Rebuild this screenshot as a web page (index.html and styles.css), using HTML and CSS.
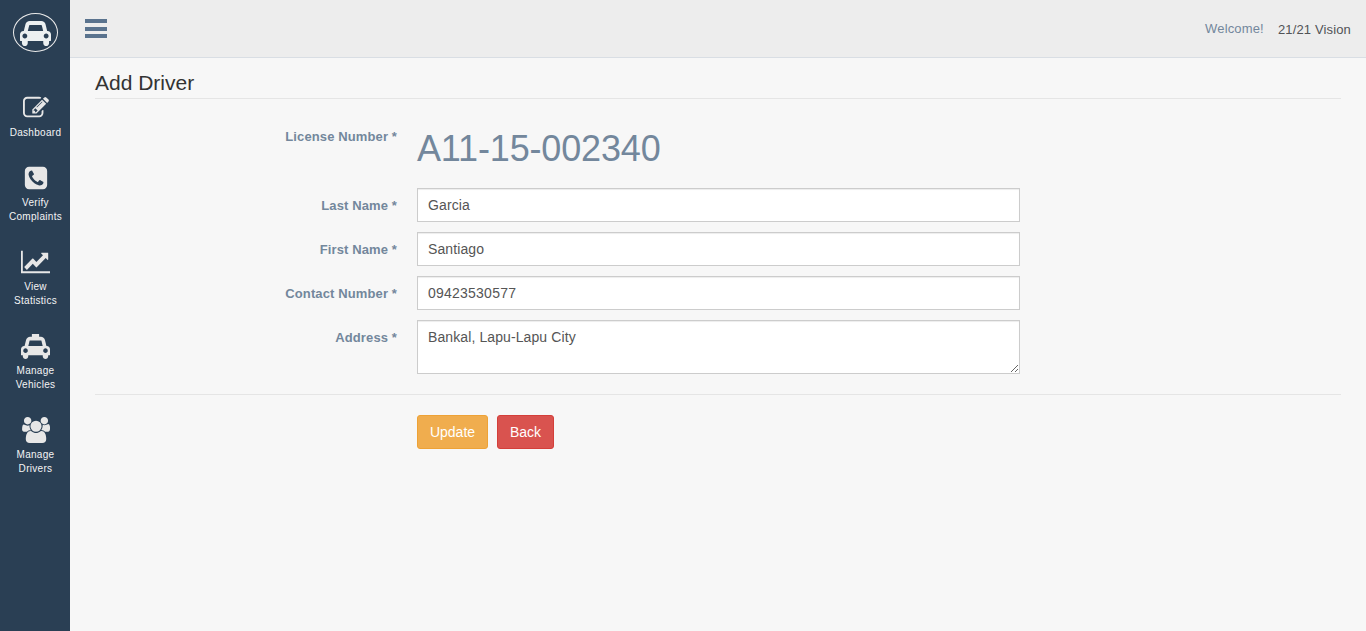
FILE: index.html
```html
<!DOCTYPE html>
<html lang="en">
<head>
<meta charset="utf-8">
<title>Add Driver</title>
<link rel="stylesheet" href="styles.css">
</head>
<body>
<div class="app">
  <aside class="sidebar">
    <a class="logo"><svg width="31" height="28" viewBox="0 0 2048 1792" preserveAspectRatio="none"><path d="M480 1088q0-66-47-113t-113-47-113 47-47 113 47 113 113 47 113-47 47-113zm36-320h1016l-89-357q-2-8-14-17.5t-21-9.5h-768q-9 0-21 9.5t-14 17.5zm1372 320q0-66-47-113t-113-47-113 47-47 113 47 113 113 47 113-47 47-113zm160-96v384q0 14-9 23t-23 9h-96v128q0 80-56 136t-136 56-136-56-56-136v-128h-1024v128q0 80-56 136t-136 56-136-56-56-136v-128h-96q-14 0-23-9t-9-23v-384q0-93 65.5-158.5t158.5-65.5h28l105-419q23-94 104-157.5t179-63.5h768q98 0 179 63.5t104 157.5l105 419h28q93 0 158.5 65.5t65.5 158.5z"/></svg></a>
    <nav class="menu">
      <a class="item"><svg width="26" height="26" viewBox="0 0 1792 1792"><path d="M888 1184l116-116-152-152-116 116v56h96v96h56zm440-720q-16-16-33 1l-350 350q-17 17-1 33t33-1l350-350q17-17 1-33zm80 594v190q0 119-84.5 203.5t-203.5 84.5h-832q-119 0-203.5-84.5t-84.5-203.5v-832q0-119 84.5-203.5t203.5-84.5h832q63 0 117 25 15 7 18 23 3 17-9 29l-49 49q-14 14-32 8-23-6-45-6h-832q-66 0-113 47t-47 113v832q0 66 47 113t113 47h832q66 0 113-47t47-113v-126q0-13 9-22l64-64q15-15 35-7t20 29zm-96-738l288 288-672 672h-288v-288zm444 132l-92 92-288-288 92-92q28-28 68-28t68 28l152 152q28 28 28 68t-28 68z"/></svg><span>Dashboard</span></a>
      <a class="item"><svg width="26" height="26" viewBox="0 0 1792 1792"><path d="M1408 1193q0-11-2-16t-18-16.5-40.5-25-47.5-26.5-45.5-25-28.5-15q-5-3-19-13t-25-15-21-5q-15 0-36.5 20.5t-39.5 45-38.5 45-33.5 20.5q-7 0-16.5-3.5t-15.5-6.5-17-9.5-14-8.5q-99-55-170-126.5t-127-170.5q-2-3-8.5-14t-9.5-17-6.5-15.5-3.5-16.5q0-13 20.5-33.5t45-38.5 45-39.5 20.5-36.5q0-10-5-21t-15-25-13-19q-3-6-15-28.5t-25-45.5-26.5-47.5-25-40.5-16.5-18-16-2q-48 0-101 22-46 21-80 94.5t-34 130.5q0 16 2.5 34t5 30.5 9 33 10 29.5 12.5 33 11 30q60 164 216.5 320.5t320.5 216.5q6 2 30 11t33 12.5 29.5 10 33 9 30.5 5 34 2.5q57 0 130.5-34t94.5-80q22-53 22-101zm256-777v960q0 119-84.5 203.5t-203.5 84.5h-960q-119 0-203.5-84.5t-84.5-203.5v-960q0-119 84.5-203.5t203.5-84.5h960q119 0 203.5 84.5t84.5 203.5z"/></svg><span>Verify Complaints</span></a>
      <a class="item"><svg width="29" height="26" viewBox="0 0 2048 1792" preserveAspectRatio="none"><path d="M2048 1536v128h-2048v-1536h128v1408h1920zm-128-1248v435q0 21-19.5 29.5t-35.5-7.5l-121-121-633 633q-10 10-23 10t-23-10l-233-233-416 416-192-192 585-585q10-10 23-10t23 10l233 233 464-464-121-121q-16-16-7.5-35.5t29.5-19.5h435q14 0 23 9t9 23z"/></svg><span>View Statistics</span></a>
      <a class="item"><svg width="29" height="26" viewBox="0 0 2048 1792" preserveAspectRatio="none"><path d="M480 1216q0-66-47-113t-113-47-113 47-47 113 47 113 113 47 113-47 47-113zm36-320h1016l-89-357q-2-8-14-17.5t-21-9.5h-768q-9 0-21 9.5t-14 17.5zm1372 320q0-66-47-113t-113-47-113 47-47 113 47 113 113 47 113-47 47-113zm160-96v384q0 14-9 23t-23 9h-96v64q0 80-56 136t-136 56-136-56-56-136v-64h-1024v64q0 80-56 136t-136 56-136-56-56-136v-64h-96q-14 0-23-9t-9-23v-384q0-93 65.5-158.5t158.5-65.5h28l105-419q23-94 104-157.5t179-63.5h128v-160q0-14 9-23t23-9h448q14 0 23 9t9 23v160h128q98 0 179 63.5t104 157.5l105 419h28q93 0 158.5 65.5t65.5 158.5z"/></svg><span>Manage Vehicles</span></a>
      <a class="item"><svg width="28" height="26" viewBox="0 0 1920 1792"><path d="M593 896q-162 5-265 128h-134q-82 0-138-40.5t-56-118.5q0-353 124-353 6 0 43.5 21t97.5 42.5 119 21.5q67 0 133-23-5 37-5 66 0 159 93 293zm1071 637q0 120-73 189.5t-194 69.5h-874q-121 0-194-69.5t-73-189.5q0-53 3.5-103.5t14-109 26.5-108.5 43-97.5 62-81 85.5-53.5 111.5-20q10 0 43 21.5t73 48 107 48 135 21.5 135-21.5 107-48 73-48 43-21.5q61 0 111.5 20t85.5 53.5 62 81 43 97.5 26.5 108.5 14 109 3.5 103.5zm-1024-1277q0 106-75 181t-181 75-181-75-75-181 75-181 181-75 181 75 75 181zm704 384q0 159-112.5 271.5t-271.5 112.5-271.5-112.5-112.5-271.5 112.5-271.5 271.5-112.5 271.5 112.5 112.5 271.5zm576 225q0 78-56 118.5t-138 40.5h-134q-103-123-265-128 93-134 93-293 0-29-5-66 66 23 133 23 59 0 119-21.5t97.5-42.5 43.5-21q124 0 124 353zm-128-609q0 106-75 181t-181 75-181-75-75-181 75-181 181-75 181 75 75 181z"/></svg><span>Manage Drivers</span></a>
    </nav>
  </aside>
  <div class="main">
    <header class="topbar">
      <a class="toggle"><svg width="22" height="19" viewBox="0 0 22 19" shape-rendering="crispEdges"><path d="M0 0h22v4H0zM0 8h22v4H0zM0 15h22v4H0z"/></svg></a>
      <div class="user"><span class="welcome">Welcome!</span><span class="name">21/21 Vision</span></div>
    </header>
    <main class="content">
      <h2 class="title">Add Driver</h2>
      <form class="form">
        <div class="row license"><label class="label">License Number *</label><div class="number">A11-15-002340</div></div>
        <div class="row"><label class="label" for="last">Last Name *</label><input class="field" id="last" value="Garcia"></div>
        <div class="row"><label class="label" for="first">First Name *</label><input class="field" id="first" value="Santiago"></div>
        <div class="row"><label class="label" for="contact">Contact Number *</label><input class="field digits" id="contact" value="09423530577"></div>
        <div class="row"><label class="label" for="address">Address *</label><textarea class="field area" id="address">Bankal, Lapu-Lapu City</textarea></div>
        <div class="actions"><button type="button" class="btn update">Update</button><button type="button" class="btn back">Back</button></div>
      </form>
    </main>
  </div>
</div>
</body>
</html>
```

FILE: styles.css
```css
* { box-sizing: border-box; }
body {
  margin: 0;
  background: #f7f7f7;
  color: #73879c;
  font: 13px/18px "Liberation Sans", Arial, sans-serif;
}
.app { display: flex; height: 631px; overflow: hidden; }
.sidebar { width: 70px; flex: none; background: #2a3f54; }
.logo {
  display: flex;
  align-items: center;
  justify-content: center;
  width: 45px;
  height: 39px;
  margin: 13px 0 0 13px;
  border: 1px solid #eaeaea;
  border-radius: 50%;
  fill: #ecf0f1;
}
.menu { display: flex; flex-direction: column; gap: 25px; padding-top: 43px; }
.item {
  display: flex;
  flex-direction: column;
  align-items: center;
  gap: 5px;
  padding: 0 4px 0 5px;
  color: #f4f4f4;
  fill: #e7e7e7;
  font-size: 10px;
  line-height: 14px;
  letter-spacing: .3px;
  text-align: center;
}
.item svg { display: block; }
.main { flex: 1; }
.topbar {
  display: flex;
  justify-content: space-between;
  height: 58px;
  padding: 19px 15px 0;
  background: #ededed;
  border-bottom: 1px solid #d9dee4;
}
.toggle { fill: #5a738e; line-height: 0; }
.user { display: flex; gap: 14px; padding-top: 1px; line-height: 18px; }
.welcome { letter-spacing: .15px; }
.name { padding-top: 1px; color: #515356; letter-spacing: .15px; }
.content { padding: 12px 25px 0; }
.title {
  height: 29px;
  margin: 0;
  border-bottom: 1px solid #e5e5e5;
  color: #333;
  font-size: 21px;
  line-height: 26px;
  font-weight: 400;
}
.form { display: flex; flex-direction: column; gap: 10px; padding-top: 29px; }
.row { display: grid; grid-template-columns: 302px 603px; column-gap: 20px; }
.license { height: 50px; }
.label { padding-top: 9px; text-align: right; font-weight: 700; letter-spacing: .12px; }
.license .label { padding-top: 0; }
.number { padding-top: 1px; font-size: 36px; line-height: 40px; letter-spacing: -.15px; }
.field {
  display: block;
  width: 100%;
  height: 34px;
  margin: 0;
  padding: 6px 10px;
  border: 1px solid #ccc;
  border-radius: 0;
  outline: 0;
  background: #fff;
  box-shadow: inset 0 1px 1px rgba(0, 0, 0, .075);
  color: #555;
  font: 14px/20px "Liberation Sans", Arial, sans-serif;
  letter-spacing: .1px;
}
.digits { letter-spacing: .23px; }
.area { height: 54px; resize: vertical; }
.actions {
  display: flex;
  gap: 9px;
  margin-top: 10px;
  padding: 20px 0 0 322px;
  border-top: 1px solid #e5e5e5;
}
.btn {
  height: 34px;
  padding: 0;
  border: 1px solid;
  border-radius: 3px;
  color: #fff;
  font: 14px/20px "Liberation Sans", Arial, sans-serif;
}
.update { width: 71px; background: #f0ad4e; border-color: #eea236; }
.back { width: 57px; background: #d9534f; border-color: #d43f3a; }
```
